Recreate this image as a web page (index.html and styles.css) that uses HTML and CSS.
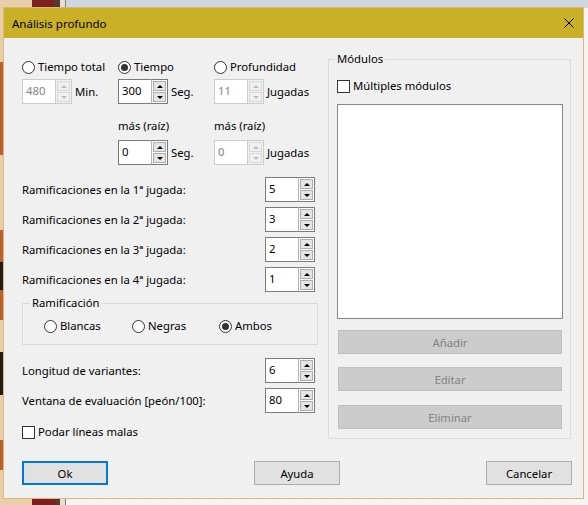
FILE: index.html
```html
<!DOCTYPE html>
<html lang="es">
<head>
    <meta charset="UTF-8">
    <title>Análisis profundo</title>
    <link rel="stylesheet" href="styles.css">
</head>
<body>
    <div class="desk-top"></div>
    <div class="desk-left"></div>

    <div class="dialog">
        <div class="titlebar">
            <span class="title">Análisis profundo</span>
            <svg class="close" width="10" height="10" viewBox="0 0 10 10">
                <path d="M0.5 0.5 L9.5 9.5 M9.5 0.5 L0.5 9.5" stroke="#000" stroke-width="1"/>
            </svg>
        </div>

        <div class="client">
            <div class="main">
                <div class="left">
                    <div class="trow radios">
                        <label class="opt"><i class="radio"></i>Tiempo total</label>
                        <label class="opt"><i class="radio on"></i>Tiempo</label>
                        <label class="opt"><i class="radio"></i>Profundidad</label>
                    </div>
                    <div class="trow spins">
                        <div class="cell">
                            <div class="spin off"><span class="val">480</span><span class="arrows"><i class="up"></i><i class="dn"></i></span></div>
                            <span class="unit">Min.</span>
                        </div>
                        <div class="cell">
                            <div class="spin"><span class="val">300</span><span class="arrows"><i class="up"></i><i class="dn"></i></span></div>
                            <span class="unit">Seg.</span>
                        </div>
                        <div class="cell">
                            <div class="spin off"><span class="val">11</span><span class="arrows"><i class="up"></i><i class="dn"></i></span></div>
                            <span class="unit">Jugadas</span>
                        </div>
                    </div>
                    <div class="trow extra-label">
                        <span></span>
                        <span>más (raíz)</span>
                        <span>más (raíz)</span>
                    </div>
                    <div class="trow spins second">
                        <span></span>
                        <div class="cell">
                            <div class="spin"><span class="val">0</span><span class="arrows"><i class="up"></i><i class="dn"></i></span></div>
                            <span class="unit">Seg.</span>
                        </div>
                        <div class="cell">
                            <div class="spin off"><span class="val">0</span><span class="arrows"><i class="up"></i><i class="dn"></i></span></div>
                            <span class="unit">Jugadas</span>
                        </div>
                    </div>

                    <div class="branches">
                        <div class="frow">
                            <span>Ramificaciones en la 1ª jugada:</span>
                            <div class="spin"><span class="val">5</span><span class="arrows"><i class="up"></i><i class="dn"></i></span></div>
                        </div>
                        <div class="frow">
                            <span>Ramificaciones en la 2ª jugada:</span>
                            <div class="spin"><span class="val">3</span><span class="arrows"><i class="up"></i><i class="dn"></i></span></div>
                        </div>
                        <div class="frow">
                            <span>Ramificaciones en la 3ª jugada:</span>
                            <div class="spin"><span class="val">2</span><span class="arrows"><i class="up"></i><i class="dn"></i></span></div>
                        </div>
                        <div class="frow">
                            <span>Ramificaciones en la 4ª jugada:</span>
                            <div class="spin"><span class="val">1</span><span class="arrows"><i class="up"></i><i class="dn"></i></span></div>
                        </div>
                    </div>

                    <div class="group side-group">
                        <div class="group-title">Ramificación</div>
                        <div class="side-opts">
                            <label class="opt"><i class="radio"></i>Blancas</label>
                            <label class="opt"><i class="radio"></i>Negras</label>
                            <label class="opt"><i class="radio on"></i>Ambos</label>
                        </div>
                    </div>

                    <div class="frow first">
                        <span>Longitud de variantes:</span>
                        <div class="spin"><span class="val">6</span><span class="arrows"><i class="up"></i><i class="dn"></i></span></div>
                    </div>
                    <div class="frow">
                        <span>Ventana de evaluación [peón/100]:</span>
                        <div class="spin"><span class="val">80</span><span class="arrows"><i class="up"></i><i class="dn"></i></span></div>
                    </div>

                    <label class="opt prune"><i class="check"></i>Podar líneas malas</label>
                </div>

                <div class="group engines">
                    <div class="group-title">Módulos</div>
                    <label class="opt multi"><i class="check"></i>Múltiples módulos</label>
                    <div class="listbox"></div>
                    <button class="flat add">Añadir</button>
                    <button class="flat edit">Editar</button>
                    <button class="flat del">Eliminar</button>
                </div>
            </div>

            <div class="footer">
                <button class="btn default">Ok</button>
                <button class="btn">Ayuda</button>
                <button class="btn">Cancelar</button>
            </div>
        </div>
    </div>
</body>
</html>
```

FILE: styles.css
```css
html, body {
    margin: 0;
    padding: 0;
}
body {
    width: 588px;
    height: 505px;
    overflow: hidden;
    position: relative;
    font-family: "Noto Sans", "Open Sans", sans-serif;
    font-size: 11.3px;
    color: #000;
    background: linear-gradient(to right,
        #e7d0a9 0, #e7d0a9 32px,
        #7b1f20 32px, #7b1f20 55px,
        #4c3b39 55px, #4c3b39 60px,
        #eadfce 60px, #eadfce 65px,
        #7c7c7c 65px, #7c7c7c 66px,
        #f4f4f4 66px);
}
.desk-top {
    position: absolute;
    left: 66px;
    top: 0;
    right: 0;
    height: 8px;
    background: #cfd6df;
}
.desk-left {
    position: absolute;
    left: 0;
    top: 0;
    width: 3px;
    height: 505px;
    background: linear-gradient(to bottom,
        #e7d0a9 0, #e7d0a9 62px,
        #b9612f 62px, #b9612f 155px,
        #e7d0a9 155px, #e7d0a9 230px,
        #b9612f 230px, #b9612f 262px,
        #1d1d1d 262px, #1d1d1d 290px,
        #b9612f 290px, #b9612f 320px,
        #e7d0a9 320px, #e7d0a9 352px,
        #1d1d1d 352px, #1d1d1d 395px,
        #e7d0a9 395px, #e7d0a9 440px,
        #b9612f 440px, #b9612f 470px,
        #e7d0a9 470px);
}

.dialog {
    position: absolute;
    left: 3px;
    top: 7px;
    width: 581px;
    height: 492px;
    box-sizing: border-box;
    border: 1px solid #e2b577;
    background: #f0f0f0;
    display: flex;
    flex-direction: column;
}
.titlebar {
    height: 30px;
    background: #cab026;
    display: flex;
    align-items: center;
    justify-content: space-between;
    padding: 0 9px 0 8px;
}
.title {
    font-size: 11.5px;
}
.close {
    display: block;
}

.client {
    padding: 21px 11px 0 18px;
}
.main {
    display: grid;
    grid-template-columns: 306px 243px;
}

/* radio / check */
.opt {
    display: flex;
    align-items: center;
    height: 16px;
    line-height: 16px;
    white-space: nowrap;
}
.radio, .check {
    width: 13px;
    height: 13px;
    box-sizing: border-box;
    border: 1px solid #333;
    background: #fff;
    margin-right: 3px;
    flex: none;
    position: relative;
}
.radio {
    border-radius: 50%;
}
.radio.on::after {
    content: "";
    position: absolute;
    left: 2px;
    top: 2px;
    width: 7px;
    height: 7px;
    border-radius: 50%;
    background: #333;
}

/* time block */
.trow {
    display: grid;
    grid-template-columns: 96px 96px auto;
}
.trow.spins {
    margin-top: 4px;
}
.trow.spins.second {
    margin-top: 6px;
}
.extra-label {
    margin-top: 14px;
    line-height: 16px;
}
.cell {
    display: flex;
    align-items: center;
}
.unit {
    margin-left: 3px;
}

/* spin box */
.spin {
    display: flex;
    width: 50px;
    height: 25px;
    flex: none;
}
.spin .val {
    flex: 1;
    border: 1px solid #7a7a7a;
    border-right: none;
    background: #fff;
    padding: 3px 0 0 3px;
    line-height: 16px;
}
.spin .arrows {
    width: 17px;
    box-sizing: border-box;
    border: 1px solid #7a7a7a;
    border-left: 1px solid #b4b4b4;
    background: #fff;
    padding: 1px;
    display: flex;
    flex-direction: column;
    gap: 1px;
}
.spin .arrows i {
    flex: 1;
    background: #e5e5e5;
    border: 1px solid #adadad;
    display: flex;
    align-items: center;
    justify-content: center;
}
.spin .arrows i::after {
    content: "";
    border-left: 3px solid transparent;
    border-right: 3px solid transparent;
}
.spin .up::after {
    border-bottom: 3px solid #000;
}
.spin .dn::after {
    border-top: 3px solid #000;
}
.spin.off .val {
    border-color: #cccccc;
    color: #838383;
}
.spin.off .arrows {
    border-color: #cccccc;
    background: #f0f0f0;
}
.spin.off .arrows i {
    background: #f0f0f0;
    border-color: #dadada;
}
.spin.off .up::after {
    border-bottom-color: #bcbcbc;
}
.spin.off .dn::after {
    border-top-color: #bcbcbc;
}

/* labelled fields */
.branches {
    margin-top: 12px;
}
.frow {
    width: 293px;
    display: flex;
    align-items: center;
    justify-content: space-between;
    margin-top: 5px;
}
.branches .frow:first-child {
    margin-top: 0;
}
.frow.first {
    margin-top: 13px;
}

/* group boxes */
.group {
    border: 1px solid #dcdcdc;
}
.group-title {
    margin: -9px 0 0 7px;
    padding: 0 2px;
    width: fit-content;
    background: #f0f0f0;
    line-height: 16px;
}
.side-group {
    width: 296px;
    box-sizing: border-box;
    margin-top: 11px;
    padding-bottom: 10px;
}
.side-opts {
    display: grid;
    grid-template-columns: 88px 87px auto;
    padding-left: 21px;
    margin-top: 7px;
}
.prune {
    margin-top: 11px;
}

.engines {
    padding: 0 0 10px 8px;
    align-self: start;
    height: 380px;
    box-sizing: border-box;
}
.engines .group-title {
    margin-left: -2px;
}
.multi {
    margin-top: 11px;
}
.listbox {
    width: 226px;
    height: 215px;
    box-sizing: border-box;
    margin-top: 10px;
    border: 1px solid #828790;
    background: #fff;
}
.flat {
    display: block;
    width: 224px;
    height: 24px;
    margin-left: 1px;
    border: 1px solid #bfbfbf;
    background: #cccccc;
    color: #838383;
    font-family: inherit;
    font-size: inherit;
    padding: 0;
}
.add { margin-top: 11px; }
.edit { margin-top: 13px; }
.del { margin-top: 14px; }

/* footer */
.footer {
    display: flex;
    justify-content: space-between;
    margin-top: 21px;
}
.btn {
    width: 86px;
    height: 24px;
    box-sizing: border-box;
    border: 1px solid #adadad;
    background: #e1e1e1;
    font-family: inherit;
    font-size: inherit;
    color: #000;
    padding: 0;
}
.btn.default {
    border: 2px solid #0078d7;
}
```
